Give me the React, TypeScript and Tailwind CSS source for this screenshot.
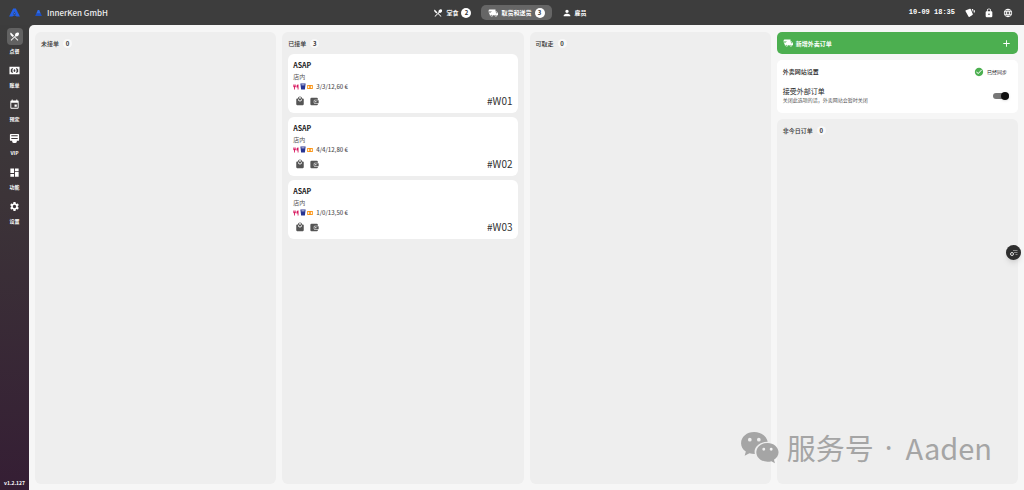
import React from 'react';
import {
  MdAdd,
  MdCheckCircle,
  MdDashboard,
  MdEvent,
  MdLanguage,
  MdLocalDining,
  MdLocalMall,
  MdLock,
  MdPerson,
  MdSettings,
} from 'react-icons/md';

function Logo({ className }: { className: string }) {
  return (
    <svg viewBox="0 0 24 20" className={className} aria-hidden="true">
      <path fillRule="evenodd" d="M9 1h6l9 18h-7l-5-3-5 3H0zM12 8l-3 6 3 1.500 3-1.500z" fill="#2460e6" />
      <path d="M12 10l2 3-2 1.500-2-1.500z" fill="#2d6bea" />
    </svg>
  );
}

function SmallLogo({ className }: { className: string }) {
  return (
    <svg viewBox="0 0 18 16" className={className} aria-hidden="true">
      <path d="M7 0h4l4 10H3z" fill="#2d6bea" />
      <path d="M3 9h12l3 7H0z" fill="#1c4fc4" />
    </svg>
  );
}

function TruckFast({ className }: { className: string }) {
  return (
    <svg viewBox="0 0 24 24" className={className} fill="currentColor" aria-hidden="true">
      <path
        fillRule="evenodd"
        d="M3 13.500L2.250 12H7.500l-.6-1.200H2L1.250 9.300h7.800L8.450 8.100H1.110L.25 6.600H2V6a2 2 0 0 1 2-2.500h14v4.600h3l3 4.500v5h-2a3 3 0 0 1-6 0h-4a3 3 0 0 1-6 0H4v-4.100H3M19 10.100v2.500h3.500l-1.960-2.500H19M9 16.100a1.500 1.500 0 1 0 0 3 1.500 1.500 0 0 0 0-3m10 0a1.500 1.500 0 1 0 0 3 1.500 1.500 0 0 0 0-3"
      />
    </svg>
  );
}

function PosTerminal({ className }: { className: string }) {
  return (
    <svg viewBox="0 0 24 24" className={className} fill="currentColor" aria-hidden="true">
      <path
        fillRule="evenodd"
        d="M4 2h16a2 2 0 0 1 2 2v11a2 2 0 0 1-2 2h-3v3l-3 2h-4l-3-2v-3H4a2 2 0 0 1-2-2V4a2 2 0 0 1 2-2zm1 3v2h14V5zm0 6v2h14v-2z"
      />
    </svg>
  );
}

function Banknote({ className }: { className: string }) {
  return (
    <svg viewBox="0 0 24 24" className={className} fill="currentColor" aria-hidden="true">
      <path
        fillRule="evenodd"
        d="M1 4h22v16H1zm5 3a2 2 0 0 1-2 2v6a2 2 0 0 1 2 2h3.500C8 16 7.500 14 7.500 12S8 8 9.500 7zm12 0h-3.500c1.500 1 2 3 2 5s-.5 4-2 5H18a2 2 0 0 1 2-2V9a2 2 0 0 1-2-2zm-6 2c-1.200 0-2 1.300-2 3s.8 3 2 3 2-1.300 2-3-.8-3-2-3z"
      />
    </svg>
  );
}

function Cutlery({ className }: { className: string }) {
  return (
    <svg viewBox="0 0 24 24" className={className} fill="currentColor" aria-hidden="true">
      <path d="M1 2h2.500v6H5V2h2.500v6H9V2h2.500v7c0 2.500-1.500 4-3.500 4.500V22H4.500v-8.500C2.500 13 1 11.500 1 9zM22 2v20h-3.500v-8H14V8c0-3.500 3-6 8-6z" />
    </svg>
  );
}

function Cup({ className }: { className: string }) {
  return (
    <svg viewBox="0 0 20 24" className={className} fill="currentColor" aria-hidden="true">
      <path fillRule="evenodd" d="M1 2h18l-2.500 20h-13zm3.500 3l.4 3h10.200l.4-3z" />
    </svg>
  );
}

function Wallet({ className }: { className: string }) {
  return (
    <svg viewBox="0 0 24 24" className={className} fill="currentColor" aria-hidden="true">
      <path
        fillRule="evenodd"
        d="M4 2h14a3 3 0 0 1 3 3v2h-8a3 3 0 0 0-3 3v5a3 3 0 0 0 3 3h8v1a3 3 0 0 1-3 3H4a3 3 0 0 1-3-3V5a3 3 0 0 1 3-3z"
      />
      <path fillRule="evenodd" d="M13 8.500h10v8H13a1.500 1.500 0 0 1-1.500-1.500v-5A1.500 1.500 0 0 1 13 8.500zm2.500 2.200a1.800 1.800 0 1 0 0 3.600 1.800 1.800 0 0 0 0-3.600z" />
    </svg>
  );
}

function Cards({ className }: { className: string }) {
  return (
    <svg viewBox="0 0 24 24" className={className} fill="currentColor" aria-hidden="true">
      <path d="M2.200 5.500L11.600 1.700a1.600 1.600 0 0 1 2.100.9l5 12a1.600 1.600 0 0 1-.9 2.100l-7.400 4.700a1.600 1.600 0 0 1-2.100-.9L1.300 7.600a1.600 1.600 0 0 1 .9-2.100z" />
      <path d="M16 2.500h2a2 2 0 0 1 2 2v7zM21.500 5l1.200.6a2 2 0 0 1 1 2.600L21.500 13z" />
    </svg>
  );
}

function WeChat({ className }: { className: string }) {
  return (
    <svg viewBox="0 0 40 34" className={className} fill="currentColor" aria-hidden="true">
      <path
        fillRule="evenodd"
        d="M14 1C6.500 1 .5 6 .5 12.500c0 3.600 1.900 6.600 4.900 8.700L4.200 25.500l4.900-2.600c1.800.5 3.500.7 5.600.7C13 16.500 19.500 11 28 11.200 26.700 5.200 20.800 1 14 1zM9.500 7a1.900 1.900 0 1 1 0 3.800 1.900 1.900 0 0 1 0-3.800zm9.300 0a1.900 1.900 0 1 1 0 3.800 1.900 1.900 0 0 1 0-3.800z"
      />
      <path
        fillRule="evenodd"
        d="M27.700 12.300c-6.500 0-11.500 4.300-11.500 9.700s5 9.700 11.500 9.700c1.400 0 2.800-.2 4-.6l3.700 2.100-1-3.500c2.900-1.900 4.700-4.600 4.700-7.700 0-5.400-5-9.700-11.400-9.700zm-3.800 5a1.500 1.500 0 1 1 0 3 1.500 1.500 0 0 1 0-3zm7.600 0a1.500 1.500 0 1 1 0 3 1.500 1.500 0 0 1 0-3z"
      />
    </svg>
  );
}

const navItems = [
  { label: '点餐', Icon: MdLocalDining, active: true },
  { label: '账单', Icon: Banknote },
  { label: '预定', Icon: MdEvent },
  { label: 'VIP', Icon: PosTerminal },
  { label: '功能', Icon: MdDashboard },
  { label: '设置', Icon: MdSettings },
];

const tabs = [
  { label: '堂食', Icon: MdLocalDining, count: 2 },
  { label: '取货和送货', Icon: TruckFast, count: 3, active: true },
  { label: '雇员', Icon: MdPerson },
];

const orders = [
  { id: '#W01', summary: '3/3/12,60 €' },
  { id: '#W02', summary: '4/4/12,80 €' },
  { id: '#W03', summary: '1/0/13,50 €' },
];

function Column({ title, count, children }: { title: string; count: number; children?: React.ReactNode }) {
  return (
    <section className="flex flex-1 flex-col rounded-md bg-[#eeeeee] px-1.5 pt-1.5">
      <h2 className="flex h-[10px] items-center gap-1 text-[6px] font-medium text-[#333]">
        {title}
        <span className="flex size-[9px] items-center justify-center rounded-full bg-[#f8f8f8] font-bold">{count}</span>
      </h2>
      {children}
    </section>
  );
}

function OrderCard({ id, summary }: { id: string; summary: string }) {
  return (
    <article className="flex h-[59px] flex-col rounded-md bg-white px-[5px] pt-[7px]">
      <h3 className="text-[7px] leading-[9px] font-bold text-[#222]">ASAP</h3>
      <p className="mt-[3px] text-[6px] leading-[8px] text-[#555]">店内</p>
      <p className="mt-px flex items-center text-[6px] leading-[9px] font-medium text-[#555]">
        <Cutlery className="size-[6px] text-[#d81b60]" />
        <Cup className="ml-px h-[7px] w-[6px] text-[#283593]" />
        <Banknote className="ml-px size-[6px] text-[#fb8c00]" />
        <span className="ml-[3px]">{summary}</span>
      </p>
      <div className="mt-1 flex items-center text-[#555]">
        <MdLocalMall className="ml-0.5 size-[10px]" />
        <Wallet className="ml-[5px] size-[9px]" />
        <span className="ml-auto text-[10px] leading-[12px] text-[#333]">{id}</span>
      </div>
    </article>
  );
}

export default function App() {
  return (
    <div className="relative flex min-h-screen flex-col bg-[linear-gradient(to_bottom,#3c3c3c_5%,#3c3438_40%,#351e34_100%)] font-['Noto_Sans_CJK_SC',sans-serif] text-white">
      <header className="grid h-[25px] grid-cols-[1fr_auto_1fr] items-center bg-[#3d3d3d]">
        <div className="flex items-center">
          <Logo className="ml-[9px] h-[9px] w-[11px]" />
          <SmallLogo className="ml-[15px] h-[6px] w-[7px]" />
          <h1 className="ml-[5px] text-[8px] leading-[12px] font-medium text-[#eee]">InnerKen GmbH</h1>
        </div>
        <nav className="mr-1 flex items-center gap-[3px]">
          {tabs.map(({ label, Icon, count, active }) => (
            <button
              key={label}
              type="button"
              className={`flex h-[15px] items-center rounded-[5px] px-[7px] text-[6px] font-bold ${active ? 'bg-[#666]' : ''}`}
            >
              <Icon className="size-[10px]" />
              <span className="ml-[3px]">{label}</span>
              {count !== undefined && (
                <span className="ml-[3px] flex size-[10px] items-center justify-center rounded-full bg-white text-[#333]">
                  {count}
                </span>
              )}
            </button>
          ))}
        </nav>
        <div className="flex items-center justify-end pr-[11px]">
          <time className="mr-[10px] font-['Liberation_Mono',monospace] text-[7px] font-bold">10-09 18:35</time>
          <div className="flex gap-[9px]">
            <button type="button" aria-label="Cards"><Cards className="size-[10px]" /></button>
            <button type="button" aria-label="Lock"><MdLock className="size-[10px]" /></button>
            <button type="button" aria-label="Language"><MdLanguage className="size-[10px]" /></button>
          </div>
        </div>
      </header>

      <div className="flex flex-1">
        <aside className="flex w-[29px] flex-col items-center">
          <nav className="flex w-full flex-col items-center gap-2 pt-[3px]">
            {navItems.map(({ label, Icon, active }) => (
              <a key={label} href="#" className="flex flex-col items-center gap-[2px] text-[5px] leading-[7px] font-bold">
                <span className={`flex h-[17px] w-4 items-center justify-center rounded-[4px] ${active ? 'bg-[#626262]' : ''}`}>
                  <Icon className="size-[11px]" />
                </span>
                {label}
              </a>
            ))}
          </nav>
          <p className="mt-auto pb-[3px] text-[5px] leading-[8px] font-bold">v1.2.127</p>
        </aside>

        <main className="grid flex-1 grid-cols-4 gap-1.5 rounded-tl-[5px] bg-[#f6f6f6] px-1.5 pt-[7px] pb-1.5">
          <Column title="未接单" count={0} />
          <Column title="已接单" count={3}>
            <div className="mt-[6px] flex flex-col gap-1">
              {orders.map((order) => (
                <OrderCard key={order.id} {...order} />
              ))}
            </div>
          </Column>
          <Column title="可取走" count={0} />
          <div className="flex flex-col gap-1.5">
            <button type="button" className="flex h-[22px] items-center rounded-[5px] bg-[#4caf50] px-1.5 text-[6px] font-bold">
              <TruckFast className="size-[10px]" />
              <span className="ml-[3px]">新增外卖订单</span>
              <MdAdd className="ml-auto size-[11px]" />
            </button>
            <section className="flex h-[53px] flex-col rounded-[5px] bg-white px-1.5 pt-1.5 text-[#222]">
              <div className="flex h-[11px] items-center justify-between">
                <h2 className="text-[6px] font-medium">外卖网站设置</h2>
                <p className="mr-[5px] flex items-center gap-[3px] text-[5px]">
                  <MdCheckCircle className="size-[10px] text-[#4caf50]" />
                  已经同步
                </p>
              </div>
              <label className="mt-[10px] flex items-center justify-between">
                <span className="flex flex-col">
                  <span className="text-[7px] leading-[9px]">接受外部订单</span>
                  <span className="text-[5px] leading-[8px] text-[#555]">关闭此选项的话，外卖网站会暂时关闭</span>
                </span>
                <input
                  type="checkbox"
                  role="switch"
                  defaultChecked
                  className="mr-[3px] flex h-[6px] w-4 appearance-none items-center rounded-full bg-[#777] before:size-2 before:shrink-0 before:rounded-full before:bg-[#111] before:shadow checked:justify-end"
                />
              </label>
            </section>
            <Column title="非今日订单" count={0} />
          </div>
        </main>
      </div>

      <button
        type="button"
        aria-label="Switch view"
        className="absolute top-[245px] right-[3px] flex size-[15px] items-center justify-center rounded-full bg-[#2e2e2e] shadow-md"
      >
        <svg viewBox="0 0 16 16" className="size-2" fill="none" stroke="#ddd" strokeWidth="2" aria-hidden="true">
          <path d="M6 3h9M8 7h7M11 11h4" stroke="#888" />
          <circle cx="4" cy="10" r="3" />
        </svg>
      </button>

      <div className="pointer-events-none absolute right-[32px] bottom-[22px] flex items-center text-[29px] leading-[42px] text-[#a5a5a5]">
        <WeChat className="mr-[7px] h-[33px] w-[40px]" />
        <span>服务号</span>
        <span className="mr-[13px] ml-[11px] font-['Noto_Sans',sans-serif]">·</span>
        <span>Aaden</span>
      </div>
    </div>
  );
}
